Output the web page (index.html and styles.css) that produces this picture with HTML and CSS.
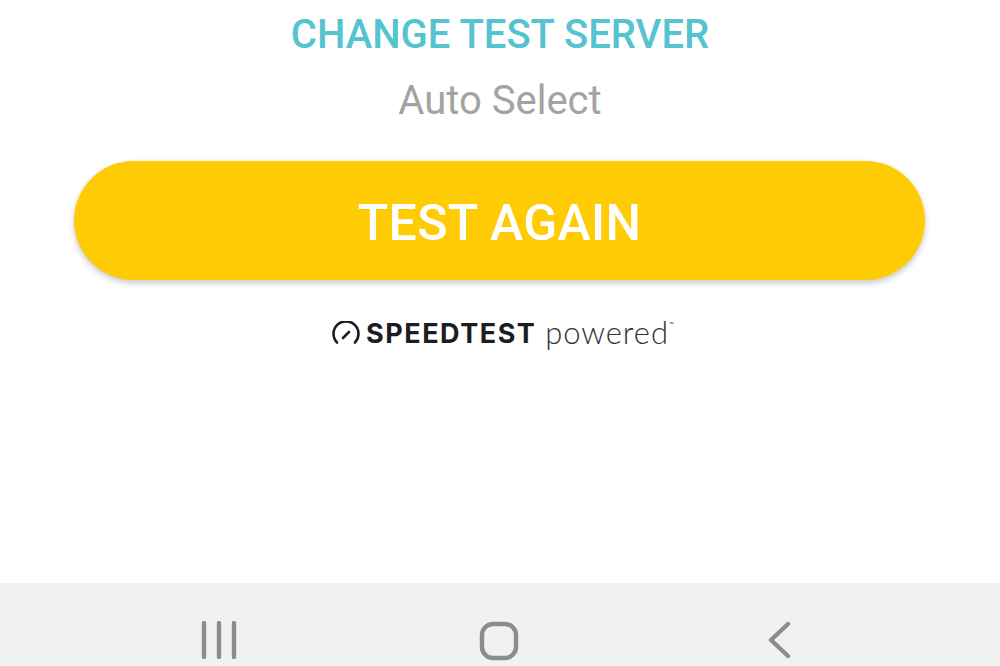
FILE: index.html
```html
<!DOCTYPE html>
<html lang="en">
<head>
    <meta charset="UTF-8">
    <meta name="viewport" content="width=device-width, initial-scale=1.0">
    <title>Speed Test</title>
    <link rel="stylesheet" href="styles.css">
</head>
<body>

<div class="screen">
    <div class="content">
        <div class="change-server">CHANGE TEST SERVER</div>
        <div class="server-name">Auto Select</div>
        <button class="test-button">TEST AGAIN</button>
        <div class="powered">
            <svg class="gauge" width="30" height="24" viewBox="0 0 30 24">
                <path d="M6 21.5 A12.5 12.5 0 1 1 24 21.5" fill="none" stroke="#1c1c22" stroke-width="2.6" stroke-linecap="round"/>
                <path d="M12 17 L18 11" fill="none" stroke="#1c1c22" stroke-width="2.6" stroke-linecap="round"/>
            </svg>
            <span class="brand">SPEEDTEST</span>
            <span class="powered-word">powered</span><span class="tm">™</span>
        </div>
    </div>

    <div class="nav-bar">
        <svg class="nav-icon" width="38" height="38" viewBox="0 0 38 38">
            <path d="M4 2 V36 M19 2 V36 M34 2 V36" fill="none" stroke="#8c8c8c" stroke-width="4.4" stroke-linecap="round"/>
        </svg>
        <svg class="nav-icon home-icon" width="40" height="40" viewBox="0 0 40 40">
            <rect x="3" y="3" width="34" height="34" rx="11" fill="none" stroke="#8c8c8c" stroke-width="4.4"/>
        </svg>
        <svg class="nav-icon" width="26" height="38" viewBox="0 0 26 38">
            <path d="M22 3 L5 19 L22 35" fill="none" stroke="#8c8c8c" stroke-width="4.4" stroke-linecap="round" stroke-linejoin="round"/>
        </svg>
    </div>
</div>

</body>
</html>
```

FILE: styles.css
```css
body {
    margin: 0;
    background-color: #fff;
    font-family: Roboto, "Liberation Sans", sans-serif;
}

.screen {
    display: flex;
    flex-direction: column;
    height: 666px;
    overflow: hidden;
}

.content {
    flex: 1;
    display: flex;
    flex-direction: column;
    align-items: center;
    padding-top: 13px;
}

.change-server {
    font-size: 40px;
    line-height: 44px;
    font-weight: 500;
    color: #55c3d0;
}

.server-name {
    margin-top: 22px;
    font-size: 40px;
    line-height: 44px;
    color: #a3a3a3;
}

.test-button {
    margin-top: 38px;
    margin-left: -1px;
    width: 851px;
    height: 119px;
    border: none;
    border-radius: 60px;
    background-color: #ffcb05;
    color: #fff;
    font-family: inherit;
    font-size: 50px;
    font-weight: 500;
    letter-spacing: 0.3px;
    padding-top: 5px;
    box-shadow: 0 3px 6px rgba(0, 0, 0, 0.22);
}

.powered {
    display: flex;
    align-items: center;
    margin-top: 38px;
    margin-left: 5px;
    height: 32px;
    color: #1c1c22;
}

.gauge {
    margin-right: 5px;
    margin-bottom: 2px;
}

.brand {
    font-family: Inter, sans-serif;
    font-size: 27px;
    font-weight: 700;
    letter-spacing: 1.5px;
    margin-bottom: 2px;
}

.powered-word {
    margin-left: 9px;
    margin-bottom: 4px;
    font-family: Lato, sans-serif;
    font-size: 31px;
    font-weight: 300;
    letter-spacing: 0.9px;
    color: #333;
}

.tm {
    align-self: flex-start;
    font-size: 8px;
    margin-top: 3px;
    color: #555;
}

.nav-bar {
    flex: none;
    height: 83px;
    display: flex;
    justify-content: space-between;
    align-items: flex-start;
    box-sizing: border-box;
    padding: 38px 208px 0 200px;
    background-color: #f1f1f1;
}

.home-icon {
    margin: 0 3px 0 -3px;
}
```
